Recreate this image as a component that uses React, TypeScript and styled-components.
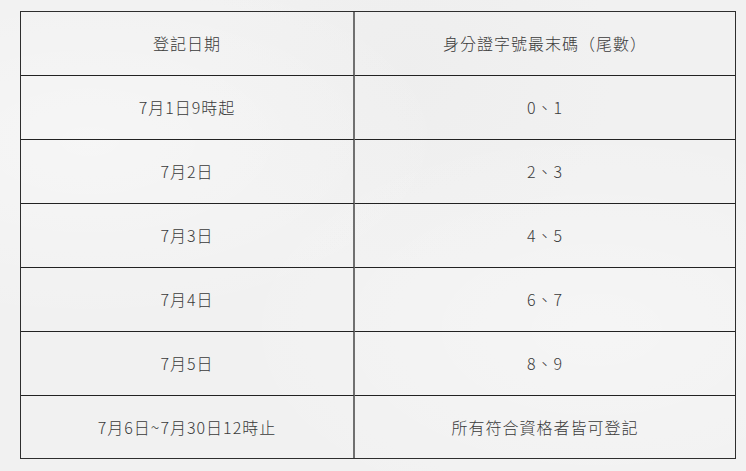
import React from 'react';
import styled, { createGlobalStyle } from 'styled-components';

const GlobalStyle = createGlobalStyle`
  html, body {
    margin: 0;
    padding: 0;
  }
  body {
    width: 746px;
    height: 471px;
    overflow: hidden;
    background-color: #f1f1f1;
    background-image:
      radial-gradient(ellipse at 12% 30%, rgba(255, 255, 255, 0.35), transparent 40%),
      radial-gradient(ellipse at 80% 70%, rgba(255, 255, 255, 0.3), transparent 45%),
      radial-gradient(ellipse at 55% 15%, rgba(230, 230, 230, 0.25), transparent 35%);
    font-family: 'Noto Sans CJK TC', 'Open Sans', sans-serif;
  }
`;

const Page = styled.div`
  padding: 11px 0 0 20px;
`;

const Table = styled.div`
  box-sizing: border-box;
  width: 716px;
  border: 1px solid #2e2e2e;
  display: grid;
  grid-template-columns: 334px 1fr;
  grid-template-rows: repeat(6, 64px) 62px;
`;

const Cell = styled.div<{ first: boolean; last: boolean }>`
  box-sizing: border-box;
  display: flex;
  align-items: center;
  justify-content: center;
  color: #3a3a3a;
  font-size: 16px;
  font-weight: 300;
  letter-spacing: 1px;
  border-bottom: ${({ last }) => (last ? 'none' : '1px solid #222')};
  border-right: ${({ first }) => (first ? '2px solid #707070' : 'none')};
  padding-bottom: 1px;
`;

const rows: [string, string][] = [
  ['登記日期', '身分證字號最末碼（尾數）'],
  ['7月1日9時起', '0、1'],
  ['7月2日', '2、3'],
  ['7月3日', '4、5'],
  ['7月4日', '6、7'],
  ['7月5日', '8、9'],
  ['7月6日~7月30日12時止', '所有符合資格者皆可登記'],
];

const App = () => {
  return (
    <>
      <GlobalStyle />
      <Page>
        <Table>
          {rows.map(([date, digits], i) => {
            const last = i === rows.length - 1;
            return (
              <React.Fragment key={i}>
                <Cell first last={last}>
                  {date}
                </Cell>
                <Cell first={false} last={last}>
                  {digits}
                </Cell>
              </React.Fragment>
            );
          })}
        </Table>
      </Page>
    </>
  );
};

export default App;
